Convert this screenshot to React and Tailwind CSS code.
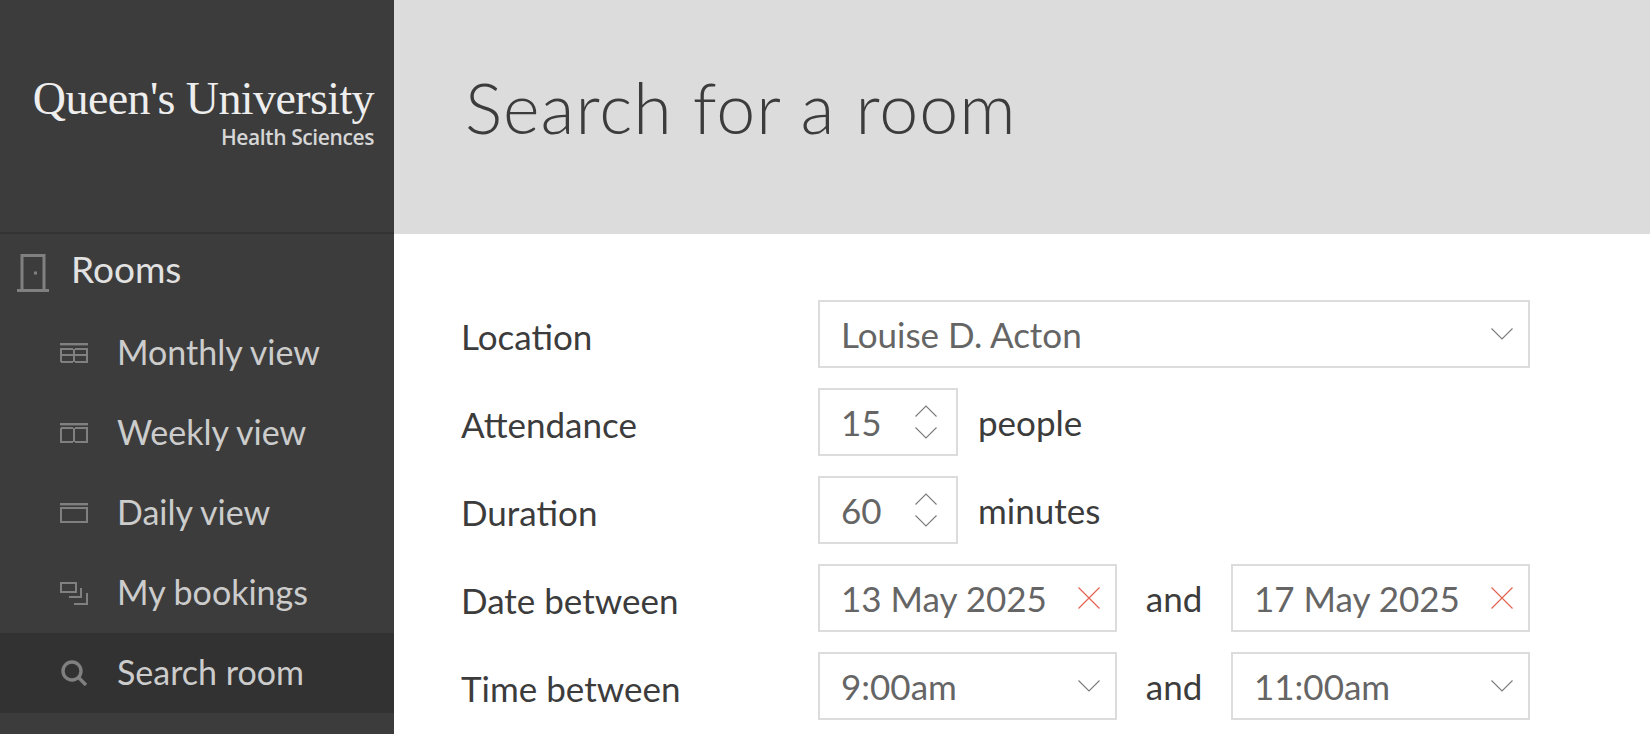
function Chevron({ up, className = "" }) {
    return (
        <svg width="22" height="12" viewBox="0 0 22 12" fill="none" stroke="#7a7a7a" strokeWidth="1.1" className={className}>
            <path d={up ? "M0.5 11.5 L11 1 L21.5 11.5" : "M0.5 0.5 L11 11 L21.5 0.5"} />
        </svg>
    );
}

function Cross() {
    return (
        <svg width="22" height="22" viewBox="0 0 22 22" fill="none" stroke="#e2604e" strokeWidth="1.1">
            <path d="M0.5 0.5 L21.5 21.5 M21.5 0.5 L0.5 21.5" />
        </svg>
    );
}

function ViewIcon({ children }) {
    return (
        <svg width="28" height="20" viewBox="0 0 28 20" fill="none" stroke="#808080" strokeWidth="2" className="shrink-0">
            <path d="M0 1.2 H28" strokeWidth="2.4" />
            {children}
        </svg>
    );
}

function MonthlyIcon() {
    return (
        <ViewIcon>
            <path d="M1 19 V6 H13 M15 6 H27 V19 H15 M13 19 H1 M1 12 H27 M14 6 V19" />
        </ViewIcon>
    );
}

function WeeklyIcon() {
    return (
        <ViewIcon>
            <path d="M1 5 H13 M15 5 H27 V19 H15 M13 19 H1 V5 M14 5 V19" />
        </ViewIcon>
    );
}

function DailyIcon() {
    return (
        <ViewIcon>
            <path d="M1 5 H27 V19 H1 Z" />
        </ViewIcon>
    );
}

function BookingsIcon() {
    return (
        <svg width="28" height="23" viewBox="0 0 28 23" fill="none" stroke="#808080" strokeWidth="2" className="shrink-0">
            <rect x="1" y="1" width="15" height="9" />
            <path d="M9 15 H21 V6" />
            <path d="M14 22 H27 V11" />
        </svg>
    );
}

function SearchIcon() {
    return (
        <svg width="28" height="26" viewBox="0 0 28 26" fill="none" stroke="#808080" className="shrink-0">
            <circle cx="12" cy="11" r="9" strokeWidth="3.4" />
            <path d="M19 18 L26 25" strokeWidth="3.4" />
        </svg>
    );
}

function DoorIcon() {
    return (
        <svg width="32" height="38" viewBox="0 0 32 38" fill="none" stroke="#808080" className="shrink-0">
            <path d="M5 36 V1.5 H27 V36" strokeWidth="3" />
            <path d="M0 36.5 H32" strokeWidth="3" />
            <rect x="17" y="17.5" width="3" height="3" fill="#808080" stroke="none" />
        </svg>
    );
}

function NavItem({ icon, label, active }) {
    return (
        <div className={`h-20 flex items-center gap-[29px] pl-[60px] ${active ? "bg-[#323232]" : ""}`}>
            <div className="w-7 flex justify-center">{icon}</div>
            <span className="text-[34px] font-normal text-[#cccccc] -mt-1">{label}</span>
        </div>
    );
}

function Box({ className = "", children }) {
    return (
        <div className={`h-[68px] border-2 border-[#dcdcdc] flex items-center justify-between pl-[21px] pr-[15px] text-[35px] text-[#656565] ${className}`}>
            {children}
        </div>
    );
}

function Spinner() {
    return (
        <div className="flex flex-col gap-[10px] pr-[4px]">
            <Chevron up />
            <Chevron />
        </div>
    );
}

function Label({ children }) {
    return <div className="w-[357px] shrink-0 text-[35px] text-[#3c3c3c] pt-[4px]">{children}</div>;
}

function Row({ label, children }) {
    return (
        <div className="flex items-center h-[68px]">
            <Label>{label}</Label>
            {children}
        </div>
    );
}

function And() {
    return <div className="w-[114px] text-center text-[35px] text-[#3c3c3c]">and</div>;
}

export default function App() {
    return (
        <div className="h-screen flex overflow-hidden bg-white font-['Lato',sans-serif]">
            <aside className="w-[394px] shrink-0 bg-[#3c3c3c]">
                <div className="h-[234px] border-b-2 border-[#333333] pt-[72px] pr-[20px] flex flex-col items-end">
                    <div className="font-['Liberation_Serif',serif] text-[46px] leading-[54px] tracking-[-0.6px] text-[#eeeeee] whitespace-nowrap">Queen's University</div>
                    <div className="font-['Open_Sans',sans-serif] text-[21px] leading-[26px] tracking-[-0.4px] font-semibold text-[#d6d6d6] -mt-[2px]">Health Sciences</div>
                </div>
                <div className="h-20 flex items-center gap-[22px] pl-[17px] -mt-[1px]">
                    <DoorIcon />
                    <span className="text-[37px] text-[#e2e2e2] -mt-[8px]">Rooms</span>
                </div>
                <NavItem icon={<MonthlyIcon />} label="Monthly view" />
                <NavItem icon={<WeeklyIcon />} label="Weekly view" />
                <NavItem icon={<DailyIcon />} label="Daily view" />
                <NavItem icon={<BookingsIcon />} label="My bookings" />
                <NavItem icon={<SearchIcon />} label="Search room" active />
            </aside>
            <main className="flex-1 min-w-0">
                <header className="h-[234px] bg-[#dcdcdc] flex items-center pl-[71px]">
                    <h1 className="text-[70px] font-light text-[#3c3c3c] tracking-[1px] -mt-[19px]">Search for a room</h1>
                </header>
                <div className="pt-[66px] pl-[67px] w-[1136px] flex flex-col gap-5">
                    <Row label="Location">
                        <Box className="flex-1">
                            <span>Louise D. Acton</span>
                            <Chevron />
                        </Box>
                    </Row>
                    <Row label="Attendance">
                        <Box className="w-[140px]">
                            <span>15</span>
                            <Spinner />
                        </Box>
                        <span className="ml-[20px] text-[35px] text-[#3c3c3c]">people</span>
                    </Row>
                    <Row label="Duration">
                        <Box className="w-[140px]">
                            <span>60</span>
                            <Spinner />
                        </Box>
                        <span className="ml-[20px] text-[35px] text-[#3c3c3c]">minutes</span>
                    </Row>
                    <Row label="Date between">
                        <Box className="w-[299px]">
                            <span>13 May 2025</span>
                            <Cross />
                        </Box>
                        <And />
                        <Box className="w-[299px]">
                            <span>17 May 2025</span>
                            <Cross />
                        </Box>
                    </Row>
                    <Row label="Time between">
                        <Box className="w-[299px]">
                            <span>9:00am</span>
                            <Chevron />
                        </Box>
                        <And />
                        <Box className="w-[299px]">
                            <span>11:00am</span>
                            <Chevron />
                        </Box>
                    </Row>
                </div>
            </main>
        </div>
    );
}
